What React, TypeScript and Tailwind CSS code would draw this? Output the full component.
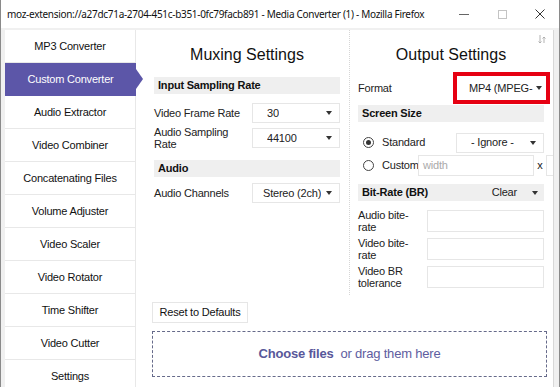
import React from "react";

const items = [
  "MP3 Converter",
  "Custom Converter",
  "Audio Extractor",
  "Video Combiner",
  "Concatenating Files",
  "Volume Adjuster",
  "Video Scaler",
  "Video Rotator",
  "Time Shifter",
  "Video Cutter",
  "Settings",
];

function Caret() {
  return (
    <svg width="6" height="4" viewBox="0 0 6 4" className="shrink-0">
      <path d="M0 0 L6 0 L3 4 Z" fill="#333" />
    </svg>
  );
}

function Select({ value, w, pl = "pl-[14px]" }: { value: string; w: string; pl?: string }) {
  return (
    <div
      className={`${w} h-[20px] bg-white border border-[#e6e6e6] flex items-center justify-between ${pl} pr-[7px] text-[11px] tracking-[-0.2px] text-[#222] shrink-0`}
    >
      <span className="whitespace-nowrap overflow-hidden">{value}</span>
      <Caret />
    </div>
  );
}

function Header({ children, right }: { children: React.ReactNode; right?: React.ReactNode }) {
  return (
    <div className="h-[17px] bg-[#efefef] flex items-center justify-between pl-[4px] pr-[6px] text-[11px] tracking-[-0.2px] font-bold text-[#111]">
      <span>{children}</span>
      {right}
    </div>
  );
}

function Radio({ checked }: { checked?: boolean }) {
  return (
    <div className="w-[11px] h-[11px] rounded-full border border-[#444] bg-white flex items-center justify-center shrink-0">
      {checked && <div className="w-[5px] h-[5px] rounded-full bg-[#333]" />}
    </div>
  );
}

export default function App() {
  return (
    <div
      className="w-[560px] h-[387px] overflow-hidden bg-[#f0f0f0] border-l border-r border-[#8a8a8a] flex flex-col"
      style={{ fontFamily: '"Liberation Sans", Arial, sans-serif' }}
    >
      {/* title bar */}
      <div className="h-[28px] bg-white flex items-center shrink-0">
        <div
          className="pl-[6px] text-[10px] tracking-[-0.3px] text-[#111] whitespace-nowrap flex-1 overflow-hidden"
          style={{ fontFamily: '"Noto Sans", "Open Sans", sans-serif' }}
        >
          moz-extension://a27dc71a-2704-451c-b351-0fc79facb891 - Media Converter (1) - Mozilla Firefox
        </div>
        <div className="w-[38px] flex justify-center">
          <div className="w-[10px] h-px bg-[#666]" />
        </div>
        <div className="w-[38px] flex justify-center">
          <div className="w-[9px] h-[9px] border border-[#c4c4c4]" />
        </div>
        <div className="w-[38px] flex justify-center">
          <svg width="10" height="10" viewBox="0 0 10 10">
            <path d="M0.5 0.5 L9.5 9.5 M9.5 0.5 L0.5 9.5" stroke="#333" strokeWidth="1" />
          </svg>
        </div>
      </div>

      <div className="flex flex-1 pl-[4px] pr-[5px] pt-[2px] min-h-0">
        {/* sidebar */}
        <div className="w-[131px] flex flex-col shrink-0 relative z-10">
          {items.map((it, i) =>
            i === 1 ? (
              <div
                key={it}
                className="h-[33px] shrink-0 bg-[#5c56a8] text-white text-[11px] tracking-[-0.2px] flex items-center justify-center relative"
              >
                {it}
                <div className="absolute right-[-7px] top-[6px] w-0 h-0 border-y-[10px] border-y-transparent border-l-[7px] border-l-[#5c56a8]" />
              </div>
            ) : (
              <div
                key={it}
                className="h-[33px] shrink-0 bg-white text-[#111] text-[11px] tracking-[-0.2px] flex items-center justify-center border-b border-[#e8e8e8] border-r border-r-[#e8e8e8]"
              >
                {it}
              </div>
            )
          )}
        </div>

        {/* main panel */}
        <div className="flex-1 min-w-0 bg-white flex flex-col border-r border-[#d8d8d8] overflow-hidden">
          <div className="flex h-[265px]">
            {/* Muxing */}
            <div className="w-[214px] shrink-0 pl-[18px] pr-[9px] flex flex-col border-r border-dotted border-[#d6d6d6]">
              <div className="pt-[15px] h-[47px] text-[16px] leading-[20px] text-[#111] text-center">
                Muxing Settings
              </div>
              <Header>Input Sampling Rate</Header>
              <div className="flex items-center justify-between mt-[9px] h-[20px]">
                <span className="text-[11px] tracking-[-0.2px] text-[#222]">Video Frame Rate</span>
                <Select value="30" w="w-[88px]" />
              </div>
              <div className="flex items-center justify-between mt-[5px] h-[20px]">
                <span className="text-[11px] tracking-[-0.2px] leading-[12px] text-[#222] w-[90px]">
                  Audio Sampling
                  <br />
                  Rate
                </span>
                <Select value="44100" w="w-[88px]" />
              </div>
              <div className="mt-[12px]">
                <Header>Audio</Header>
              </div>
              <div className="flex items-center justify-between mt-[6px] h-[20px]">
                <span className="text-[11px] tracking-[-0.2px] text-[#222]">Audio Channels</span>
                <Select value="Stereo (2ch)" w="w-[88px]" pl="pl-[10px]" />
              </div>
            </div>

            {/* Output */}
            <div className="flex-1 min-w-0 pl-[8px] pr-[9px] flex flex-col relative">
              <svg className="absolute right-[7px] top-[4px]" width="8" height="10" viewBox="0 0 8 10">
                <path d="M2 1 L2 9 M0.5 7.5 L2 9 L3.5 7.5 M6 9 L6 3 M4.5 4.5 L6 3 L7.5 4.5" stroke="#aaa" strokeWidth="0.9" fill="none" />
              </svg>
              <div className="pt-[15px] h-[42px] text-[16px] leading-[20px] text-[#111] text-center">
                Output Settings
              </div>
              <div className="flex items-center justify-between h-[32px] mr-[-6px]">
                <span className="text-[11px] tracking-[-0.2px] text-[#222]">Format</span>
                <div className="w-[97px] h-[32px] border-[4px] border-[#e60012] bg-white flex items-center justify-between pl-[12px] pr-[4px] text-[11px] tracking-[-0.2px] text-[#222]">
                  <span className="whitespace-nowrap">MP4 (MPEG-</span>
                  <Caret />
                </div>
              </div>
              <div className="mt-[1px]">
                <Header>Screen Size</Header>
              </div>
              <div className="flex items-center justify-between mt-[10px] h-[21px]">
                <div className="flex items-center gap-[8px] pl-[5px]">
                  <Radio checked />
                  <span className="text-[11px] tracking-[-0.2px] text-[#222]">Standard</span>
                </div>
                <Select value="- Ignore -" w="w-[88px]" />
              </div>
              <div className="flex items-center mt-[2px] h-[21px]">
                <div className="flex items-center gap-[8px] pl-[5px] w-[60px] shrink-0">
                  <Radio />
                  <span className="text-[11px] tracking-[-0.2px] text-[#222]">Custom</span>
                </div>
                <div className="w-[116px] h-[21px] border border-[#e6e6e6] flex items-center pl-[4px] text-[11px] tracking-[-0.2px] text-[#aaa] shrink-0">
                  width
                </div>
                <span className="text-[11px] text-[#222] w-[12px] text-center shrink-0">x</span>
                <div className="w-[20px] h-[21px] border border-[#e6e6e6] shrink-0" />
              </div>
              <div className="mt-[8px]">
                <Header
                  right={
                    <div className="flex items-center gap-[15px] font-normal text-[#222]">
                      <span>Clear</span>
                      <Caret />
                    </div>
                  }
                >
                  Bit-Rate (BR)
                </Header>
              </div>
              {[
                ["Audio bite-", "rate"],
                ["Video bite-", "rate"],
                ["Video BR", "tolerance"],
              ].map(([a, b], i) => (
                <div key={i} className={`flex items-center justify-between h-[22px] ${i === 0 ? "mt-[9px]" : "mt-[6px]"}`}>
                  <span className="text-[11px] tracking-[-0.2px] leading-[12px] text-[#222]">
                    {a}
                    <br />
                    {b}
                  </span>
                  <div className="w-[117px] h-[22px] border border-[#e6e6e6] bg-white shrink-0" />
                </div>
              ))}
            </div>
          </div>

          <div className="pl-[16px] pr-[6px] flex flex-col">
            <div className="mt-[7px] w-[96px] h-[21px] border border-[#e6e6e6] flex items-center justify-center text-[11px] tracking-[-0.2px] text-[#111]">
              Reset to Defaults
            </div>
            <div className="mt-[8px] h-[46px] border border-dashed border-[#666a8a] flex items-center justify-center gap-[7px]">
              <span className="text-[13px] tracking-[-0.2px] font-bold text-[#58579a]">Choose files</span>
              <span className="text-[13px] tracking-[-0.2px] text-[#5e5da0]">or drag them here</span>
            </div>
          </div>
        </div>
      </div>
    </div>
  );
}
